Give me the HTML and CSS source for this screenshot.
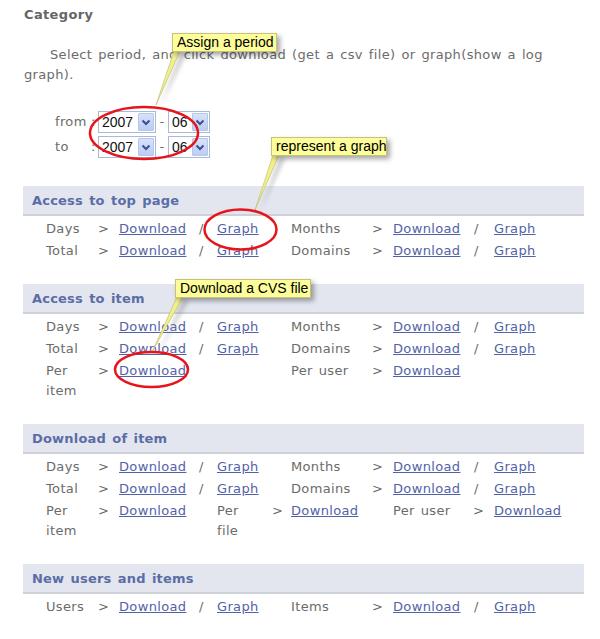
FILE: index.html
```html
<!DOCTYPE html>
<html>
<head>
<meta charset="utf-8">
<link rel="stylesheet" href="styles.css">
</head>
<body>
<div class="page">
  <h1 class="cat">Category</h1>
  <p class="intro">Select period, and click download (get a csv file) or graph(show a log graph).</p>
  <div class="period">
    <span class="plabel">from</span><span class="colon">:</span>
    <span class="sel year"><span class="val">2007</span><span class="btn"><svg width="10" height="7" viewBox="0 0 10 7"><path d="M1.5 1.5 L5 5 L8.5 1.5" fill="none" stroke="#3d4f8f" stroke-width="2"/></svg></span></span>
    <span class="dash">-</span>
    <span class="sel month"><span class="val">06</span><span class="btn"><svg width="10" height="7" viewBox="0 0 10 7"><path d="M1.5 1.5 L5 5 L8.5 1.5" fill="none" stroke="#3d4f8f" stroke-width="2"/></svg></span></span>

    <span class="plabel">to</span><span class="colon">:</span>
    <span class="sel year"><span class="val">2007</span><span class="btn"><svg width="10" height="7" viewBox="0 0 10 7"><path d="M1.5 1.5 L5 5 L8.5 1.5" fill="none" stroke="#3d4f8f" stroke-width="2"/></svg></span></span>
    <span class="dash">-</span>
    <span class="sel month"><span class="val">06</span><span class="btn"><svg width="10" height="7" viewBox="0 0 10 7"><path d="M1.5 1.5 L5 5 L8.5 1.5" fill="none" stroke="#3d4f8f" stroke-width="2"/></svg></span></span>
  </div>

  <section class="sec">
    <h2 class="bar">Access to top page</h2>
    <div class="row"><span>Days</span><span>&gt;</span><a href="#">Download</a><span>/</span><a href="#">Graph</a><span>Months</span><span>&gt;</span><a href="#">Download</a><span>/</span><a href="#">Graph</a></div>
    <div class="row"><span>Total</span><span>&gt;</span><a href="#">Download</a><span>/</span><a href="#">Graph</a><span>Domains</span><span>&gt;</span><a href="#">Download</a><span>/</span><a href="#">Graph</a></div>
  </section>

  <section class="sec">
    <h2 class="bar">Access to item</h2>
    <div class="row"><span>Days</span><span>&gt;</span><a href="#">Download</a><span>/</span><a href="#">Graph</a><span>Months</span><span>&gt;</span><a href="#">Download</a><span>/</span><a href="#">Graph</a></div>
    <div class="row"><span>Total</span><span>&gt;</span><a href="#">Download</a><span>/</span><a href="#">Graph</a><span>Domains</span><span>&gt;</span><a href="#">Download</a><span>/</span><a href="#">Graph</a></div>
    <div class="row"><span>Per item</span><span>&gt;</span><a href="#">Download</a><span></span><span></span><span>Per user</span><span>&gt;</span><a href="#">Download</a></div>
  </section>

  <section class="sec">
    <h2 class="bar">Download of item</h2>
    <div class="row"><span>Days</span><span>&gt;</span><a href="#">Download</a><span>/</span><a href="#">Graph</a><span>Months</span><span>&gt;</span><a href="#">Download</a><span>/</span><a href="#">Graph</a></div>
    <div class="row"><span>Total</span><span>&gt;</span><a href="#">Download</a><span>/</span><a href="#">Graph</a><span>Domains</span><span>&gt;</span><a href="#">Download</a><span>/</span><a href="#">Graph</a></div>
    <div class="row alt"><span>Per item</span><span>&gt;</span><a href="#">Download</a><span class="narrow">Per file</span><span>&gt;</span><a href="#">Download</a><span>Per user</span><span>&gt;</span><a href="#">Download</a></div>
  </section>

  <section class="sec">
    <h2 class="bar">New users and items</h2>
    <div class="row"><span>Users</span><span>&gt;</span><a href="#">Download</a><span>/</span><a href="#">Graph</a><span>Items</span><span>&gt;</span><a href="#">Download</a><span>/</span><a href="#">Graph</a></div>
  </section>

  <svg class="marks" width="600" height="639" viewBox="0 0 600 639">
    <defs>
      <filter id="sh" x="-50%" y="-50%" width="200%" height="200%">
        <feGaussianBlur stdDeviation="2"/>
      </filter>
    </defs>
    <polygon points="177,52 183,52 157,105" fill="#888" opacity="0.45" filter="url(#sh)" transform="translate(3,2)"/>
    <polygon points="174,51 180,51 156,105" fill="#f2f08a" stroke="#b9b76a" stroke-width="0.6"/>
    <polygon points="276,156 282,156 257,210" fill="#888" opacity="0.45" filter="url(#sh)" transform="translate(3,2)"/>
    <polygon points="273,155 279,155 255,210" fill="#f2f08a" stroke="#b9b76a" stroke-width="0.6"/>
    <polygon points="180,298 186,298 155,352" fill="#888" opacity="0.45" filter="url(#sh)" transform="translate(3,2)"/>
    <polygon points="177,297 183,297 152,352" fill="#f2f08a" stroke="#b9b76a" stroke-width="0.6"/>
    <ellipse cx="144" cy="133" rx="54" ry="26" fill="none" stroke="#e8141b" stroke-width="2.5"/>
    <ellipse cx="240.5" cy="229.5" rx="36" ry="20" fill="none" stroke="#e8141b" stroke-width="2.5"/>
    <ellipse cx="151.5" cy="369.5" rx="36.5" ry="17.5" fill="none" stroke="#e8141b" stroke-width="2.5"/>
  </svg>

  <div class="note n1">Assign a period</div>
  <div class="note n2">represent a graph</div>
  <div class="note n3">Download a CVS file</div>
</div>
</body>
</html>
```

FILE: styles.css
```css
html, body {
  margin: 0;
  padding: 0;
  background: #fff;
}
.page {
  position: relative;
  width: 600px;
  height: 639px;
  overflow: hidden;
  box-sizing: border-box;
  padding: 5px 16px 0 23px;
  font-family: "DejaVu Sans", Verdana, sans-serif;
  font-size: 13px;
  letter-spacing: 0.35px;
  word-spacing: 1.5px;
  color: #6b6b6b;
}
.cat {
  margin: 0 0 0 1px;
  font-size: 13px;
  line-height: 20px;
  font-weight: bold;
  color: #666;
}
.intro {
  margin: 20px 0 0 1px;
  line-height: 20px;
  text-indent: 26px;
  width: 530px;
}
.period {
  display: grid;
  grid-template-columns: 36px 7px 58px 12px 42px;
  grid-auto-rows: 22px;
  row-gap: 3px;
  align-items: center;
  margin: 26px 0 0 32px;
}
.plabel, .colon, .dash {
  line-height: 22px;
}
.dash {
  text-align: center;
}
.sel {
  display: flex;
  align-items: center;
  justify-content: space-between;
  height: 22px;
  box-sizing: border-box;
  border: 1px solid #a9b9d8;
  background: #fff;
  padding: 1px 1px 1px 3px;
  font-family: "Liberation Sans", Arial, sans-serif;
  font-size: 14px;
  letter-spacing: 0;
  color: #111;
}
.btn {
  display: flex;
  align-items: center;
  justify-content: center;
  width: 16px;
  height: 18px;
  box-sizing: border-box;
  border: 1px solid #b6c6ea;
  background: linear-gradient(#d7e2fb, #bccdf3);
  border-radius: 1px;
}
.sec {
  margin-top: 28px;
}
.sec + .sec {
  margin-top: 22px;
}
.bar {
  margin: 0;
  height: 28px;
  line-height: 29px;
  background: #e3e6ef;
  border-bottom: 2px solid #cfd1d8;
  padding-left: 9px;
  font-size: 13px;
  font-weight: bold;
  letter-spacing: 0.2px;
  color: #5b6da6;
  width: 552px;
}
.sec .bar + .row {
  margin-top: 2px;
}
.row {
  display: grid;
  grid-template-columns: 52px 21px 80px 18px 74px 81px 21px 81px 20px auto;
  padding-left: 23px;
  line-height: 20px;
}
.row > * {
  padding: 1px 0;
}
.row.alt {
  grid-template-columns: 52px 21px 98px 55px 19px 102px 80px 21px auto;
}
.narrow {
  max-width: 40px;
}
.row a {
  color: #5262a8;
  text-decoration: underline;
  justify-self: start;
}
.marks {
  position: absolute;
  left: 0;
  top: 0;
  pointer-events: none;
}
.note {
  position: absolute;
  height: 19px;
  box-sizing: border-box;
  padding: 0 4px;
  background: #fdfd9a;
  border: 1px solid #c5c37a;
  font-family: "Liberation Sans", Arial, sans-serif;
  font-size: 14px;
  letter-spacing: 0;
  word-spacing: 0;
  line-height: 17px;
  color: #000;
  box-shadow: 3px 3px 5px rgba(0, 0, 0, 0.35);
  white-space: nowrap;
}
.n1 { left: 172px; top: 33px; width: 105px; }
.n2 { left: 271px; top: 137px; width: 116px; }
.n3 { left: 175px; top: 279px; width: 136px; }
```
